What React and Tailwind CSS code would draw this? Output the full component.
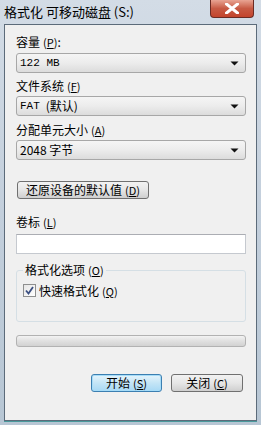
import React from "react";

const cjk = { fontFamily: '"Noto Sans CJK SC", "Noto Sans", sans-serif' };
const mono = { fontFamily: '"Liberation Mono", "Noto Sans CJK SC", monospace' };

function Key({ k }) {
  return (
    <span className="text-[11px] ml-[3px]">
      (<span className="underline">{k}</span>)
    </span>
  );
}

function Arrow() {
  return (
    <svg width="9" height="5" viewBox="0 0 9 5" className="shrink-0">
      <path d="M0.5 0.5 H8.5 L4.5 4.5 Z" fill="#111" />
    </svg>
  );
}

function Select({ children }) {
  return (
    <div className="h-[20px] flex items-center justify-between pl-[3px] pr-[6px] rounded-[3px] border border-[#a7a7a7] bg-gradient-to-b from-[#f5f5f5] via-[#ececec] to-[#dcdcdc] text-[12px] leading-none text-black">
      <span className="flex items-center">{children}</span>
      <Arrow />
    </div>
  );
}

function Label({ children, className = "" }) {
  return (
    <div className={"h-[16px] flex items-center text-[12px] leading-none text-black " + className}>
      {children}
    </div>
  );
}

export default function App() {
  return (
    <div
      className="w-[261px] h-[425px] flex flex-col bg-gradient-to-b from-[#d3dce6] via-[#c3cfdc] to-[#b7c6d4]"
      style={cjk}
    >
      {/* title bar */}
      <div className="h-[24px] flex items-start justify-between shrink-0">
        <div className="pl-[4px] pt-[4px] text-[13px] leading-[16px] text-black">
          格式化 可移动磁盘 (S:)
        </div>
        <div className="mr-[7px] w-[44px] h-[18px] rounded-b-[4px] border border-t-0 border-[#6b2b23] bg-gradient-to-b from-[#e8a493] via-[#c75a44] to-[#c3442c] flex items-center justify-center">
          <svg width="14" height="11" viewBox="0 0 14 11">
            <path d="M1.5 1 L12.5 10 M12.5 1 L1.5 10" stroke="#ffffff" strokeWidth="3" fill="none" strokeLinecap="square" />
          </svg>
        </div>
      </div>

      {/* content */}
      <div className="mx-[4px] mb-[4px] flex-1 border border-[#5c6b7a] bg-[#f0f0f0] pl-[11px] pr-[10px] flex flex-col shadow-[0_1px_0_#4a9a9c]">
        <Label className="mt-[9px]">
          容量<Key k="P" />:
        </Label>
        <div className="mt-[3px]">
          <Select>
            <span style={mono} className="text-[11px]">122 MB</span>
          </Select>
        </div>

        <Label className="mt-[5px]">
          文件系统<Key k="F" />
        </Label>
        <div className="mt-[2px]">
          <Select>
            <span style={mono} className="text-[11px]">FAT</span>
            <span className="ml-[6px]">(默认)</span>
          </Select>
        </div>

        <Label className="mt-[6px]">
          分配单元大小<Key k="A" />
        </Label>
        <div className="mt-[2px]">
          <Select>
            <span>2048 字节</span>
          </Select>
        </div>

        <div className="mt-[21px] ml-[1px] w-[132px] h-[18px] rounded-[3px] border border-[#707070] bg-gradient-to-b from-[#f2f2f2] via-[#e6e6e6] to-[#cfcfcf] flex items-center justify-center text-[12px] leading-none text-black">
          还原设备的默认值<Key k="D" />
        </div>

        <Label className="mt-[15px]">
          卷标<Key k="L" />
        </Label>
        <div className="mt-[4px] h-[20px] border border-[#c5c9cf] border-t-[#abadb3] bg-white" />

        {/* group box */}
        <div className="mt-[16px] h-[52px] border border-[#d5dfe5] rounded-[3px] relative">
          <div className="absolute left-[6px] top-[-9px] px-[2px] bg-[#f0f0f0] h-[16px] flex items-center text-[12px] leading-none text-black">
            格式化选项<Key k="O" />
          </div>
          <div className="mt-[13px] ml-[6px] flex items-center gap-[3px]">
            <div className="w-[13px] h-[13px] border border-[#8e8f8f] bg-gradient-to-br from-[#e6e6e6] to-[#ffffff] flex items-center justify-center">
              <svg width="9" height="9" viewBox="0 0 9 9">
                <path d="M1 4.5 L3.5 7.5 L8 1" stroke="#3b4f81" strokeWidth="1.8" fill="none" />
              </svg>
            </div>
            <span className="text-[12px] leading-none text-black">
              快速格式化<Key k="Q" />
            </span>
          </div>
        </div>

        {/* progress */}
        <div className="mt-[13px] h-[12px] rounded-[3px] border border-[#b2b2b2] bg-gradient-to-b from-[#f3f3f3] via-[#e0e0e0] to-[#d2d2d2]" />

        {/* buttons */}
        <div className="mt-[27px] flex justify-end gap-[9px] pr-[3px]">
          <div className="w-[71px] h-[18px] rounded-[3px] border border-[#3c7fb1] bg-gradient-to-b from-[#e5f4fc] via-[#c4e5f6] to-[#a7d9f5] shadow-[inset_0_0_0_1px_#a6dcf8] flex items-center justify-center text-[12px] leading-none text-black">
            开始<Key k="S" />
          </div>
          <div className="w-[72px] h-[18px] rounded-[3px] border border-[#707070] bg-gradient-to-b from-[#f2f2f2] via-[#e6e6e6] to-[#cfcfcf] flex items-center justify-center text-[12px] leading-none text-black">
            关闭<Key k="C" />
          </div>
        </div>
      </div>
    </div>
  );
}
